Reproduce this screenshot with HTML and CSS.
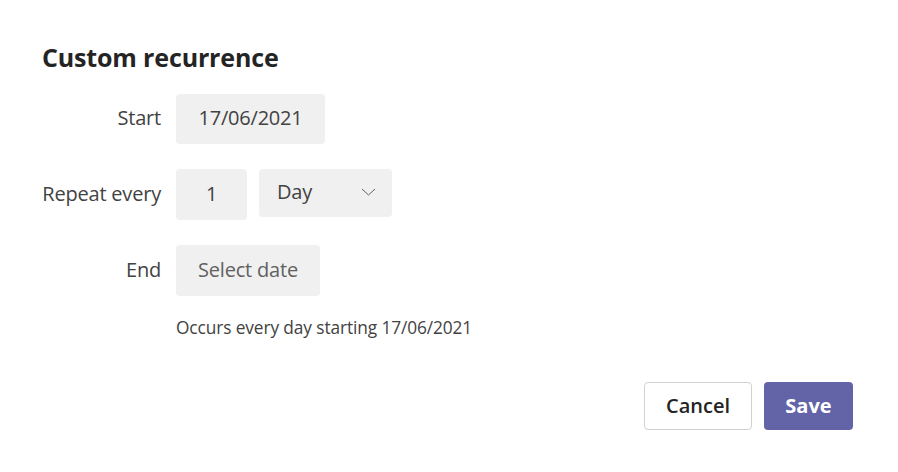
FILE: index.html
```html
<!DOCTYPE html>
<html>
<head>
<meta charset="utf-8">
<link rel="stylesheet" href="styles.css">
</head>
<body>
<div class="dialog">
  <h1 class="title">Custom recurrence</h1>
  <div class="form">
    <div class="label">Start</div>
    <div class="controls"><div class="field date">17/06/2021</div></div>
    <div class="label">Repeat every</div>
    <div class="controls">
      <div class="field num">1</div>
      <div class="field select">Day
        <svg class="chev" width="15" height="8" viewBox="0 0 15 8"><path d="M1 1 L7.5 7 L14 1" fill="none" stroke="#616161" stroke-width="1"/></svg>
      </div>
    </div>
    <div class="label">End</div>
    <div class="controls"><div class="field placeholder">Select date</div></div>
  </div>
  <div class="summary">Occurs every day starting 17/06/2021</div>
  <div class="actions">
    <button class="btn cancel">Cancel</button>
    <button class="btn save">Save</button>
  </div>
</div>
</body>
</html>
```
FILE: styles.css
```css
html, body { margin: 0; padding: 0; background: #fff; }
body { font-family: "Open Sans", "Noto Sans", sans-serif; color: #242424; }
.dialog { width: 898px; height: 472px; box-sizing: border-box; padding: 40px 45px 0 42px; }
.title { margin: 0; font-size: 25px; font-weight: 700; line-height: 34px; letter-spacing: -0.15px; color: #242424; }
.form { display: grid; grid-template-columns: 119px auto; column-gap: 15px; row-gap: 25px; margin-top: 20px; align-items: center; }
.label { text-align: right; font-size: 20px; color: #424242; letter-spacing: -0.2px; white-space: nowrap; padding-bottom: 3px; }
.controls { display: flex; gap: 12px; align-items: flex-start; }
.field { background: #f0f0f0; border-radius: 4px; height: 50px; box-sizing: border-box; display: flex; align-items: center; justify-content: center; font-size: 20px; color: #424242; letter-spacing: -0.2px; padding-bottom: 3px; }
.date { width: 149px; }
.num { width: 71px; height: 51px; }
.select { width: 133px; height: 48px; justify-content: space-between; padding: 0 16px 3px 18px; }
.chev { margin-top: 0; }
.placeholder { width: 144px; height: 51px; color: #616161; }
.summary { margin: 20px 0 0 134px; font-size: 17.3px; color: #424242; letter-spacing: -0.1px; }
.actions { display: flex; justify-content: flex-end; gap: 12px; margin-top: 43px; }
.btn { height: 48px; border-radius: 4px; font-family: inherit; font-size: 20px; font-weight: 600; padding: 0 0 2px; box-sizing: border-box; }
.cancel { width: 108px; background: #fff; border: 1px solid #d1d1d1; color: #242424; }
.save { width: 89px; background: #6264a7; border: none; color: #fff; font-weight: 700; }
```
